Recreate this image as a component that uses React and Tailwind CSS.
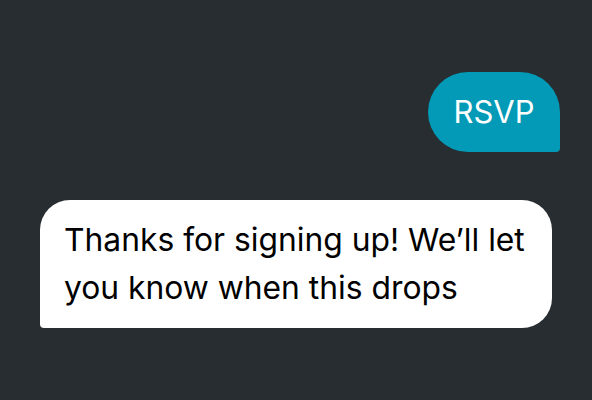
export default function App() {
  return (
    <div
      className="flex h-[400px] w-[592px] flex-col bg-[#272d31] px-10 pt-[72px]"
      style={{ fontFamily: 'Inter, "Noto Sans", sans-serif' }}
    >
      <div className="-mr-2 flex justify-end">
        <div className="flex h-20 w-[132px] items-center justify-center rounded-[40px] rounded-br-[4px] bg-[#029ab6] text-[31px] text-white">
          RSVP
        </div>
      </div>
      <div className="mt-12 rounded-[30px] rounded-bl-[4px] bg-white px-6 py-4 text-[31.8px] leading-[48px] text-black">
        Thanks for signing up! We’ll let you know when this drops
      </div>
    </div>
  );
}
